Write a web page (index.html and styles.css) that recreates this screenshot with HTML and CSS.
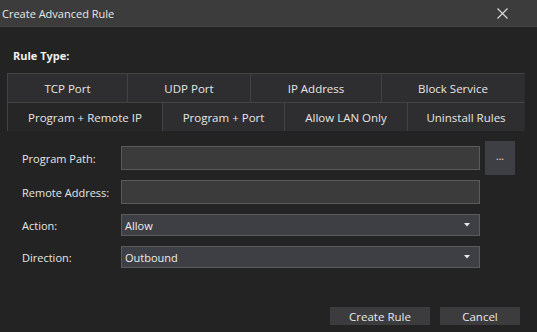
FILE: index.html
```html
<!DOCTYPE html>
<html lang="en">
<head>
    <meta charset="UTF-8">
    <meta name="viewport" content="width=device-width, initial-scale=1.0">
    <title>Create Advanced Rule</title>
    <link rel="stylesheet" href="styles.css">
</head>
<body>
    <div class="titlebar">
        <span class="title">Create Advanced Rule</span>
        <svg class="close" width="11" height="11" viewBox="0 0 11 11">
            <path d="M0.5 0.5L10.5 10.5M10.5 0.5L0.5 10.5" stroke="#d8d8d8" stroke-width="1.2" fill="none"/>
        </svg>
    </div>

    <div class="content">
        <div class="section-label">Rule Type:</div>

        <div class="tabs">
            <div class="tab-row">
                <div class="tab w120">TCP Port</div>
                <div class="tab w123">UDP Port</div>
                <div class="tab w131">IP Address</div>
                <div class="tab w144">Block Service</div>
            </div>
            <div class="tab-row">
                <div class="tab active w155">Program + Remote IP</div>
                <div class="tab w122">Program + Port</div>
                <div class="tab w123">Allow LAN Only</div>
                <div class="tab w118">Uninstall Rules</div>
            </div>
        </div>

        <div class="form">
            <div class="row row-path">
                <label class="label">Program Path:</label>
                <div class="textbox"></div>
                <button class="browse">...</button>
            </div>
            <div class="row row-remote">
                <label class="label">Remote Address:</label>
                <div class="textbox"></div>
            </div>
            <div class="row row-combo">
                <label class="label">Action:</label>
                <div class="combo">
                    <span>Allow</span>
                    <svg class="arrow" width="6" height="4" viewBox="0 0 6 4"><path d="M0 0H6L3 3.5Z" fill="#e8e8e8"/></svg>
                </div>
            </div>
            <div class="row row-combo">
                <label class="label">Direction:</label>
                <div class="combo">
                    <span>Outbound</span>
                    <svg class="arrow" width="6" height="4" viewBox="0 0 6 4"><path d="M0 0H6L3 3.5Z" fill="#e8e8e8"/></svg>
                </div>
            </div>
        </div>

        <div class="footer">
            <button class="btn btn-create">Create Rule</button>
            <button class="btn btn-cancel">Cancel</button>
        </div>
    </div>
</body>
</html>
```

FILE: styles.css
```css
body {
    margin: 0;
    background-color: #232323;
    color: #e6e6e6;
    font-family: "Open Sans", "Noto Sans", sans-serif;
    font-size: 11px;
    width: 537px;
    height: 332px;
    overflow: hidden;
}
.titlebar {
    height: 27px;
    background-color: #3c3c3c;
    border-bottom: 1px solid #444;
    display: flex;
    align-items: center;
    justify-content: space-between;
    padding: 0 29px 0 2px;
    box-sizing: border-box;
}
.title {
    color: #e8e8e8;
    font-size: 11px;
}
.close {
    display: block;
}
.content {
    padding: 0 7px;
}
.section-label {
    font-weight: bold;
    font-size: 11px;
    padding: 21px 0 0 6px;
    height: 46px;
    box-sizing: border-box;
    color: #f0f0f0;
}
.tabs {
    width: 518px;
}
.tab-row {
    display: flex;
    height: 29px;
}
.tab {
    box-sizing: border-box;
    display: flex;
    align-items: center;
    justify-content: center;
    background-color: #2e2e30;
    border-top: 1px solid #434343;
    border-left: 1px solid #434343;
    color: #e6e6e6;
    font-size: 11.5px;
}
.tab-row .tab:last-child {
    border-right: 1px solid #2a2a2a;
}
.tab.active {
    background-color: #262626;
}
.w118 { width: 118px; }
.w120 { width: 120px; }
.w122 { width: 122px; }
.w123 { width: 123px; }
.w131 { width: 131px; }
.w144 { width: 144px; }
.w155 { width: 155px; }

.form {
    padding-left: 15px;
}
.row {
    display: flex;
    align-items: center;
}
.label {
    width: 99px;
    color: #e6e6e6;
}
.row-path {
    height: 34px;
    margin-top: 10px;
}
.row-remote {
    margin-top: 5px;
    height: 24px;
}
.row-combo {
    margin-top: 10px;
    height: 22px;
}
.textbox {
    width: 359px;
    height: 24px;
    box-sizing: border-box;
    background-color: #3b3b3b;
    border: 1px solid #5a5a5a;
}
.browse {
    width: 30px;
    height: 34px;
    margin-left: 5px;
    background-color: #3e3f45;
    border: none;
    color: #e8e8e8;
    font-family: inherit;
    font-size: 10px;
    padding: 0 0 4px 0;
}
.combo {
    width: 359px;
    height: 22px;
    box-sizing: border-box;
    background-color: #3e3f44;
    border: 1px solid #5a5a5a;
    display: flex;
    align-items: center;
    justify-content: space-between;
    padding: 0 9px 0 3px;
    color: #ececec;
}
.arrow {
    display: block;
}
.footer {
    display: flex;
    justify-content: flex-end;
    gap: 10px;
    margin-top: 39px;
    padding-right: 10px;
}
.btn {
    height: 18px;
    background-color: #3c3c3f;
    border: none;
    color: #e8e8e8;
    font-family: inherit;
    font-size: 11.5px;
    padding: 0;
}
.btn-create { width: 100px; }
.btn-cancel { width: 80px; }
```
